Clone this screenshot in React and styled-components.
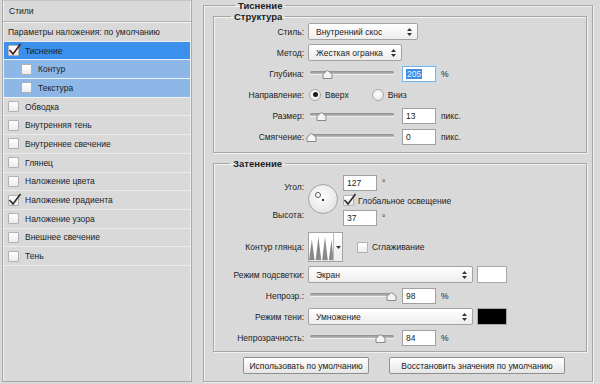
import React from "react";
import styled, { createGlobalStyle } from "styled-components";

const GlobalStyle = createGlobalStyle`
  body {
    margin: 0;
    background: #d9d9d9;
    font-family: "Liberation Sans", Arial, sans-serif;
    font-size: 8.5px;
    color: #222;
  }
`;

const styles = [
  { name: "Тиснение", checked: true, level: 0, active: "main" },
  { name: "Контур", level: 1, active: "sub" },
  { name: "Текстура", level: 1, active: "sub" },
  { name: "Обводка" },
  { name: "Внутренняя тень" },
  { name: "Внутреннее свечение" },
  { name: "Глянец" },
  { name: "Наложение цвета" },
  { name: "Наложение градиента", checked: true },
  { name: "Наложение узора" },
  { name: "Внешнее свечение" },
  { name: "Тень" },
];

const Dialog = styled.div`
  display: flex;
  width: 600px;
  height: 384px;
  box-sizing: border-box;
  padding: 0 0 2px 2px;
`;

// ---- left list
const Sidebar = styled.div`
  width: 190px;
  box-sizing: border-box;
  border: 1px solid #a9a9a9;
  border-top-color: #c4c4c4;
  box-shadow: inset 1px 0 #efefef, inset -1px 0 #efefef;
  display: flex;
  flex-direction: column;
`;

const HeaderRow = styled.div`
  height: 20px;
  display: flex;
  align-items: center;
  padding-left: 6px;
  border-bottom: 1px solid #b3b3b3;
  box-shadow: 0 1px #f3f3f3;
  margin-bottom: 1px;
`;

const Row = styled.div`
  height: 17.7px;
  display: flex;
  align-items: center;
  gap: 6px;
  padding-left: ${(p) => (p.$level ? 17 : 4)}px;
  border-bottom: 1px solid ${(p) => (p.$active ? "#eef4fb" : "#ececec")};
  background: ${(p) =>
    p.$active === "main" ? "#3a90ec" : p.$active === "sub" ? "#8cb7e7" : "transparent"};
  margin: 0 1px;
`;

const Box = styled.span`
  position: relative;
  width: 11px;
  height: 11px;
  box-sizing: border-box;
  border: 1px solid #b1b1b1;
  border-radius: 1px;
  background: linear-gradient(#ffffff, #ececec);
  flex: none;
  display: inline-flex;
`;

const Check = ({ color = "#2a2a2a" }) => (
  <svg width="14" height="13" viewBox="0 0 14 13" style={{ position: "absolute", left: -1, top: -3 }}>
    <path d="M1.5 7 L5 11 L12.5 1" fill="none" stroke={color} strokeWidth="1.6" />
  </svg>
);

// ---- right panel
const Main = styled.div`
  flex: 1;
  padding: 0 7px 0 11px;
  display: flex;
`;

const Group = styled.fieldset`
  flex: 1;
  margin: 0;
  padding: ${(p) => p.$pad || "0 5px 5px 9px"};
  border: 1px solid #a6a6a6;
  box-shadow: inset 1px 1px #f2f2f2, 1px 1px #f2f2f2;
  min-width: 0;
  display: flex;
  flex-direction: column;
`;

const Legend = styled.legend`
  font-weight: bold;
  font-size: 9.5px;
  padding: 0 3px;
  margin-left: ${(p) => p.$indent || 12}px;
  line-height: 11px;
`;

const SubGroup = styled(Group)`
  flex: none;
  margin-top: ${(p) => p.$top || 0}px;
`;

const Form = styled.div`
  display: grid;
  grid-template-columns: 85px 1fr;
  column-gap: 4px;
  row-gap: ${(p) => p.$gap || 4}px;
  align-items: center;
  padding-left: 2px;
  margin-top: ${(p) => p.$top || 0}px;
`;

const Label = styled.div`
  text-align: right;
  white-space: nowrap;
`;

const Line = styled.div`
  display: flex;
  align-items: center;
  height: ${(p) => p.$h || 17}px;
  gap: ${(p) => p.$gap || 4}px;
`;

const SelectBox = styled.div`
  width: ${(p) => p.$w}px;
  height: 17px;
  box-sizing: border-box;
  border: 1px solid #a3a3a3;
  border-radius: 2px;
  background: linear-gradient(#ffffff, #ededed);
  display: flex;
  align-items: center;
  justify-content: space-between;
  padding: 0 5px 0 7px;
`;

const Arrows = () => (
  <svg width="5" height="8" viewBox="0 0 5 8">
    <path d="M2.5 0 L5 3 L0 3 Z M2.5 8 L5 5 L0 5 Z" fill="#333" />
  </svg>
);

const Select = ({ w, children }) => (
  <SelectBox $w={w}>
    <span>{children}</span>
    <Arrows />
  </SelectBox>
);

const Field = styled.div`
  width: 34px;
  height: 16px;
  box-sizing: border-box;
  border: 1px solid ${(p) => (p.$focus ? "#7fb0e0" : "#a0a0a0")};
  box-shadow: ${(p) => (p.$focus ? "0 0 0 1px #c4def7" : "none")};
  background: #fff;
  display: flex;
  align-items: center;
  padding-left: 3px;
  flex: none;
`;

const Selected = styled.span`
  background: #3b8de6;
  color: #e8f2ff;
  padding: 0 1px;
`;

const Unit = styled.span`
  margin-left: 1px;
`;

const Track = styled.div`
  position: relative;
  width: 84px;
  height: 3px;
  margin: -3px 4px 0 2px;
  border-radius: 2px;
  background: linear-gradient(#8d8d8d, #bdbdbd);
  box-shadow: 0 1px #f0f0f0;
  flex: none;
`;

const Thumb = styled.svg`
  position: absolute;
  top: -1px;
  margin-left: -5px;
`;

const Slider = ({ value }) => (
  <Track>
    <Thumb width="11" height="9" viewBox="0 0 11 9" style={{ left: `${value * 100}%` }}>
      <path d="M5.5 0.5 L10 4 L10 8.5 L1 8.5 L1 4 Z" fill="#f4f4f4" stroke="#8a8a8a" />
    </Thumb>
  </Track>
);

const RadioDot = styled.span`
  width: 12px;
  height: 12px;
  box-sizing: border-box;
  border-radius: 50%;
  border: 1px solid #a8a8a8;
  background: radial-gradient(circle at 50% 40%, #ffffff, #e2e2e2);
  display: inline-flex;
  align-items: center;
  justify-content: center;
  &::after {
    content: "";
    width: 5px;
    height: 5px;
    border-radius: 50%;
    background: ${(p) => (p.$on ? "#1a1a1a" : "transparent")};
  }
`;

const Option = styled.span`
  display: inline-flex;
  align-items: center;
  gap: 4px;
  margin-right: ${(p) => p.$mr || 0}px;
  padding-left: 1px;
`;

const AngleBlock = styled.div`
  display: grid;
  grid-template-columns: 85px 30px 1fr;
  column-gap: 4px;
  padding-left: 2px;
  margin-top: 6px;
`;

const AngleLabels = styled.div`
  display: flex;
  flex-direction: column;
  align-items: flex-end;
  padding-top: 7px;
  gap: 18px;
`;

const Dial = styled.div`
  position: relative;
  align-self: center;
  width: 30px;
  height: 30px;
  box-sizing: border-box;
  border-radius: 50%;
  border: 1px solid #a3a3a3;
  background: radial-gradient(circle at 45% 40%, #ffffff, #e6e6e6 70%);
  margin-top: -3px;
`;

const DialHandle = styled.span`
  position: absolute;
  left: 6px;
  top: 7px;
  width: 4px;
  height: 4px;
  border: 1px solid #555;
  border-radius: 50%;
  background: #fff;
`;

const DialCenter = styled.span`
  position: absolute;
  left: 13px;
  top: 14px;
  width: 2px;
  height: 2px;
  background: #333;
`;

const AngleFields = styled.div`
  display: flex;
  flex-direction: column;
  gap: 2px;
  padding-left: 1px;
`;

const ContourBox = styled.div`
  width: 35px;
  height: 30px;
  box-sizing: border-box;
  border: 1px solid #a3a3a3;
  background: #fff;
  display: flex;
`;

const ContourDrop = styled.div`
  width: 8px;
  border-left: 1px solid #bdbdbd;
  background: linear-gradient(#fff, #ececec);
  display: flex;
  align-items: center;
  justify-content: center;
`;

const Swatch = styled.div`
  width: 30px;
  height: 17px;
  box-sizing: border-box;
  border: 1px solid #a8a8a8;
  background: ${(p) => p.$color};
`;

const Buttons = styled.div`
  display: flex;
  justify-content: center;
  gap: 20px;
  margin-top: 5px;
  padding-left: 8px;
`;

const Button = styled.div`
  width: ${(p) => p.$w}px;
  height: 17px;
  box-sizing: border-box;
  border: 1px solid #8f8f8f;
  border-radius: 2px;
  background: linear-gradient(#ffffff, #e6e6e6);
  display: flex;
  align-items: center;
  justify-content: center;
  white-space: nowrap;
`;

const App = () => (
  <>
    <GlobalStyle />
    <Dialog>
      <Sidebar>
        <HeaderRow>Стили</HeaderRow>
        <Row>Параметры наложения: по умолчанию</Row>
        {styles.map((s) => (
          <Row key={s.name} $level={s.level} $active={s.active}>
            <Box>{s.checked && <Check color={s.active ? "#4a1410" : "#2a2a2a"} />}</Box>
            {s.name}
          </Row>
        ))}
      </Sidebar>

      <Main>
        <Group>
          <Legend $indent={22}>Тиснение</Legend>

          <SubGroup $pad="1px 5px 7px 3px">
            <Legend $indent={14}>Структура</Legend>
            <Form>
              <Label>Стиль:</Label>
              <Line><Select w={110}>Внутренний скос</Select></Line>
              <Label>Метод:</Label>
              <Line><Select w={94}>Жесткая огранка</Select></Line>
              <Label>Глубина:</Label>
              <Line>
                <Slider value={0.2} />
                <Field $focus><Selected>205</Selected></Field>
                <Unit>%</Unit>
              </Line>
              <Label>Направление:</Label>
              <Line>
                <Option $mr={18}><RadioDot $on />Вверх</Option>
                <Option><RadioDot />Вниз</Option>
              </Line>
              <Label>Размер:</Label>
              <Line>
                <Slider value={0.13} />
                <Field>13</Field>
                <Unit>пикс.</Unit>
              </Line>
              <Label>Смягчение:</Label>
              <Line>
                <Slider value={0.01} />
                <Field>0</Field>
                <Unit>пикс.</Unit>
              </Line>
            </Form>
          </SubGroup>

          <SubGroup $top={5} $pad="0 5px 5px 3px">
            <Legend $indent={13}>Затенение</Legend>
            <AngleBlock>
              <AngleLabels>
                <Label>Угол:</Label>
                <Label>Высота:</Label>
              </AngleLabels>
              <Dial>
                <DialHandle />
                <DialCenter />
              </Dial>
              <AngleFields>
                <Line $h={16}><Field>127</Field><Unit>°</Unit></Line>
                <Line $h={15}>
                  <Box><Check /></Box>
                  Глобальное освещение
                </Line>
                <Line $h={16}><Field>37</Field><Unit>°</Unit></Line>
              </AngleFields>
            </AngleBlock>

            <Form $top={6}>
              <Label>Контур глянца:</Label>
              <Line $h={30} $gap={13}>
                <ContourBox>
                  <svg width="26" height="28" viewBox="0 0 26 28">
                    <path
                      d="M0 28 L3 6 L6 28 L7 28 L10 3 L13 28 L14 28 L17 3 L20 28 L21 28 L24 6 L26 28 Z"
                      fill="#8a8a8a"
                    />
                  </svg>
                  <ContourDrop>
                    <svg width="5" height="3" viewBox="0 0 5 3">
                      <path d="M0 0 L5 0 L2.5 3 Z" fill="#333" />
                    </svg>
                  </ContourDrop>
                </ContourBox>
                <Option><Box />Сглаживание</Option>
              </Line>
              <Label>Режим подсветки:</Label>
              <Line>
                <Select w={165}>Экран</Select>
                <Swatch $color="#ffffff" />
              </Line>
              <Label>Непрозр.:</Label>
              <Line>
                <Slider value={0.97} />
                <Field>98</Field>
                <Unit>%</Unit>
              </Line>
              <Label>Режим тени:</Label>
              <Line>
                <Select w={165}>Умножение</Select>
                <Swatch $color="#000000" />
              </Line>
              <Label>Непрозрачность:</Label>
              <Line>
                <Slider value={0.83} />
                <Field>84</Field>
                <Unit>%</Unit>
              </Line>
            </Form>
          </SubGroup>

          <Buttons>
            <Button $w={126}>Использовать по умолчанию</Button>
            <Button $w={176}>Восстановить значения по умолчанию</Button>
          </Buttons>
        </Group>
      </Main>
    </Dialog>
  </>
);

export default App;
